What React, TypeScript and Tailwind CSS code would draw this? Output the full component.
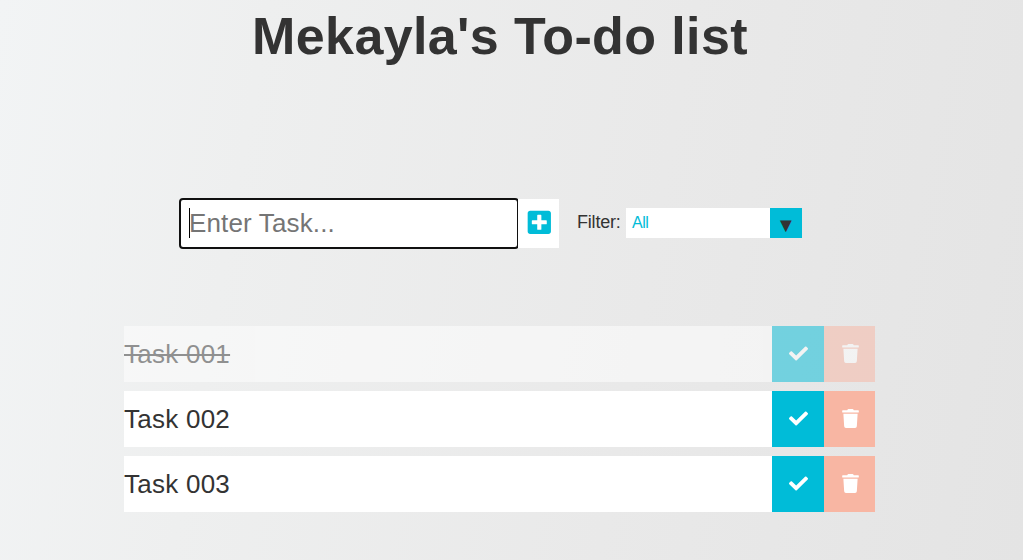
import { FaCheck, FaTrash, FaPlusSquare } from "react-icons/fa";

const tasks = [
  { name: "Task 001", done: true },
  { name: "Task 002", done: false },
  { name: "Task 003", done: false },
];

export default function App() {
  return (
    <main className="h-[560px] w-[1023px] overflow-hidden bg-[linear-gradient(100deg,#f2f4f5_0%,#eeefef_24%,#e9e9e9_62%,#e4e4e4_100%)] font-['Liberation_Sans',Arial,sans-serif] text-[#333]">
      <header className="mr-[23px] flex h-[72px] items-center justify-center">
        <h1 className="whitespace-nowrap text-[52px] font-bold leading-[60px] tracking-[0.38px]">Mekayla's To-do list</h1>
      </header>
      <form className="ml-[179px] mt-[126px] flex h-[51px] items-center">
        <div className="relative h-[51px] w-[340px] shrink-0">
          <input
            placeholder="Enter Task..."
            className="h-full w-full rounded-[4px] border-2 border-[#101010] bg-white px-2 text-[26px] tracking-[0.15px] outline-none placeholder:text-[#757575]"
          />
          <span className="absolute left-[10px] top-[10px] h-[30px] w-px bg-black" />
        </div>
        <button type="button" className="z-10 -ml-px flex h-[49px] w-[41px] items-center justify-center bg-white pb-[3px] pl-px text-[26.6px] text-[#00bcd8]">
          <FaPlusSquare />
        </button>
        <label className="ml-[18px] w-[49px] pb-[2px] text-[18px] tracking-[-0.2px]">Filter:</label>
        <button type="button" className="mb-[2px] flex h-[30px] w-44 items-center justify-between bg-white pl-[6px] text-[#00bcd8]">
          <span className="text-[16px] leading-[30px] tracking-[-0.5px]">All</span>
          <span className="flex h-full w-8 items-center justify-center bg-[#00bcd8] pt-[4px] text-[20px] text-[#333]">▼</span>
        </button>
      </form>
      <ul className="ml-[124px] mt-[77px] flex w-[751px] flex-col gap-[9px]">
        {tasks.map((t) => (
          <li key={t.name} className={t.done ? "flex h-14 bg-white opacity-50" : "flex h-14 bg-white"}>
            <span
              className={
                t.done
                  ? "flex-1 text-[26px] leading-[56px] tracking-[0.25px] line-through"
                  : "flex-1 text-[26px] leading-[56px] tracking-[0.25px]"
              }
            >
              {t.name}
            </span>
            <button type="button" className="flex w-[52px] items-center justify-center bg-[#00bcd8] pb-[2px] text-[19px] text-white">
              <FaCheck />
            </button>
            <button type="button" className="flex w-[51px] items-center justify-center bg-[#f8b6a3] pb-px pl-px text-[19px] text-white">
              <FaTrash />
            </button>
          </li>
        ))}
      </ul>
    </main>
  );
}
